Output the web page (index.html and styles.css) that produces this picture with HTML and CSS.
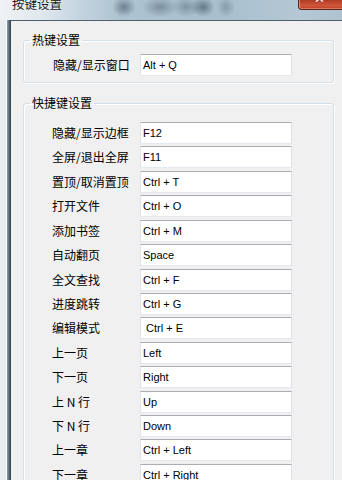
FILE: index.html
```
<!DOCTYPE html>
<html lang="zh-CN">
<head>
<meta charset="utf-8">
<title>按键设置</title>
<link rel="stylesheet" href="styles.css">
</head>
<body>
<div class="window">
  <div class="titlebar">
    <span class="title">按键设置</span>
    <span class="close"><span class="close-x">✕</span></span>
  </div>
  <div class="main">
    <div class="frame"></div>
    <div class="content">
      <fieldset class="group g1">
        <legend>热键设置</legend>
        <div class="rows">
          <div class="row"><span class="lbl">隐藏/显示窗口</span><span class="key">Alt + Q</span></div>
        </div>
      </fieldset>
      <fieldset class="group g2">
        <legend>快捷键设置</legend>
        <div class="rows">
          <div class="row"><span class="lbl">隐藏/显示边框</span><span class="key">F12</span></div>
          <div class="row"><span class="lbl">全屏/退出全屏</span><span class="key">F11</span></div>
          <div class="row"><span class="lbl">置顶/取消置顶</span><span class="key">Ctrl + T</span></div>
          <div class="row"><span class="lbl">打开文件</span><span class="key">Ctrl + O</span></div>
          <div class="row"><span class="lbl">添加书签</span><span class="key">Ctrl + M</span></div>
          <div class="row"><span class="lbl">自动翻页</span><span class="key">Space</span></div>
          <div class="row"><span class="lbl">全文查找</span><span class="key">Ctrl + F</span></div>
          <div class="row"><span class="lbl">进度跳转</span><span class="key">Ctrl + G</span></div>
          <div class="row"><span class="lbl">编辑模式</span><span class="key">&nbsp;Ctrl + E</span></div>
          <div class="row"><span class="lbl">上一页</span><span class="key">Left</span></div>
          <div class="row"><span class="lbl">下一页</span><span class="key">Right</span></div>
          <div class="row"><span class="lbl">上 N 行</span><span class="key">Up</span></div>
          <div class="row"><span class="lbl">下 N 行</span><span class="key">Down</span></div>
          <div class="row"><span class="lbl">上一章</span><span class="key">Ctrl + Left</span></div>
          <div class="row"><span class="lbl">下一章</span><span class="key">Ctrl + Right</span></div>
        </div>
      </fieldset>
    </div>
  </div>
</div>
</body>
</html>
```
FILE: styles.css
```
* { box-sizing: border-box; }
html, body {
  margin: 0;
  padding: 0;
  width: 342px;
  height: 480px;
  overflow: hidden;
  background: #f0f0f0;
  font-family: "Noto Sans CJK SC", "Noto Sans", sans-serif;
  color: #000;
}
.window {
  display: flex;
  flex-direction: column;
  width: 342px;
  height: 480px;
}
.titlebar {
  height: 20px;
  flex: none;
  display: flex;
  align-items: flex-start;
  background:
    radial-gradient(ellipse 12px 10px at 124px 7px, rgba(65,85,100,0.6), rgba(65,85,100,0) 100%),
    radial-gradient(ellipse 18px 10px at 160px 7px, rgba(65,85,100,0.45), rgba(65,85,100,0) 100%),
    radial-gradient(ellipse 14px 10px at 186px 7px, rgba(65,85,100,0.4), rgba(65,85,100,0) 100%),
    radial-gradient(ellipse 12px 10px at 203px 7px, rgba(55,75,90,0.6), rgba(55,75,90,0) 100%),
    radial-gradient(ellipse 9px 10px at 226px 7px, rgba(65,85,100,0.35), rgba(65,85,100,0) 100%),
    linear-gradient(to right, #eef2f5 0px, #e0e8ee 40px, #c4d4df 80px, #aec3d1 120px, #a9bfce 220px, #b4c8d5 300px, #aec2cf 342px);
}
.title {
  margin-top: -3px;
  padding-left: 12px;
  font-size: 12.5px;
  line-height: 14px;
  color: #1a1a1a;
  text-shadow: 0 0 3px rgba(255,255,255,0.9);
}
.close {
  margin-left: auto;
  width: 44px;
  height: 10px;
  overflow: hidden;
  display: flex;
  justify-content: center;
  background: linear-gradient(to bottom, #b03a24 0%, #d0563a 60%, #c13f26 100%);
  border: 1px solid #5a2418;
  border-top: none;
  border-right: none;
  border-bottom-left-radius: 4px;
  box-shadow: inset 1px 0 0 rgba(255,200,180,0.5), inset 0 -1px 0 rgba(255,200,180,0.4);
}
.close-x {
  color: #fff;
  font-family: "DejaVu Sans", sans-serif;
  font-weight: bold;
  font-size: 13px;
  line-height: 13px;
  margin-top: -8px;
  margin-left: -2px;
}
.main {
  flex: 1;
  display: flex;
  min-height: 0;
  overflow: hidden;
}
.frame {
  width: 11px;
  flex: none;
  background: linear-gradient(to right, #ebeced 0px, #ebeced 6px, #ffffff 6px, #ffffff 7px, #8e9fae 7px, #5b6c7c 9px, #2e3d4b 11px);
}
.content {
  flex: 1;
  background: #f0f0f0;
  border-top: 1px solid #4e5e6c;
  padding: 0 8px 0 12px;
}
.group {
  margin: 0;
  padding: 0;
  border: 1px solid #d5dfe5;
  border-radius: 3px;
  box-shadow: inset 1px 1px 0 #ffffff, 1px 1px 0 #ffffff;
  min-width: 0;
}
.group legend {
  margin-left: 6px;
  padding: 0 2px;
  font-size: 12px;
  line-height: 16px;
}
.g1 { margin-top: 11px; }
.g1 .rows { padding: 6px 0 6px 29px; }
.g2 { margin-top: 12px; }
.g2 .rows { padding: 11px 0 20px 28px; row-gap: 2.43px; }
.rows {
  display: grid;
}
.row {
  display: grid;
  grid-template-columns: 88px 152px;
  align-items: center;
  height: 22px;
}
.g1 .row { grid-template-columns: 87px 152px; }
.lbl {
  font-size: 12px;
  line-height: 16px;
  white-space: nowrap;
}
.key {
  height: 22px;
  background: #fff;
  border: 1px solid;
  border-color: #abadb3 #dbdfe6 #e3e9ef #e2e3ea;
  padding: 0 2px;
  font-family: "Liberation Sans", Arial, sans-serif;
  font-size: 11px;
  line-height: 20px;
  white-space: pre;
}
```
